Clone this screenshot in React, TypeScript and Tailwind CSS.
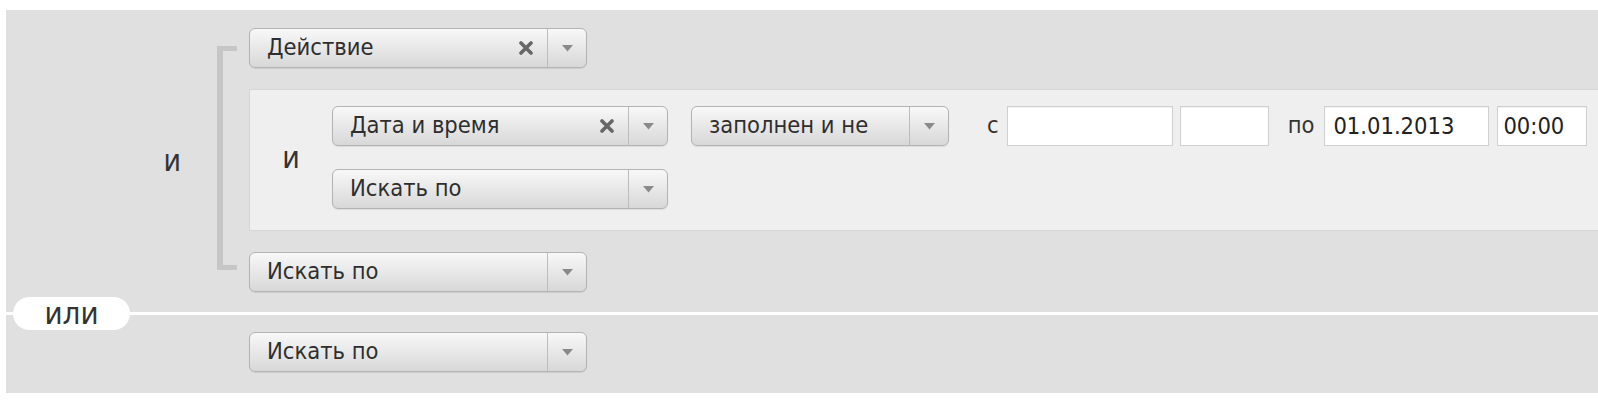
import React from "react";

const FONT = { fontFamily: '"DejaVu Sans Condensed", "Liberation Sans", Arial, sans-serif' };

function Arrow() {
  return (
    <svg width="11" height="7" viewBox="0 0 11 7">
      <path d="M0 0 L11 0 L5.5 6.5 Z" fill="#8a8a8a" />
    </svg>
  );
}

function Cross() {
  return (
    <svg width="14" height="14" viewBox="0 0 14 14">
      <path d="M2 2 L12 12 M12 2 L2 12" stroke="#676767" strokeWidth="3.6" strokeLinecap="round" />
    </svg>
  );
}

function Select({ label, width, clearable }: { label: string; width: string; clearable?: boolean }) {
  return (
    <div
      className={`${width} h-[40px] flex items-stretch shrink-0 rounded-[6px] border border-[#b3b3b3] bg-linear-to-b from-[#f8f8f8] to-[#d8d8d8] shadow-[0_1px_1px_rgba(0,0,0,0.08)]`}
    >
      <div className="flex-1 flex items-center pl-[17px] text-[23.5px] text-[#2e2e2e] leading-none">{label}</div>
      {clearable && (
        <div className="flex items-center pr-[14px]">
          <Cross />
        </div>
      )}
      <div className="w-[39px] border-l border-[#bcbcbc] flex items-center justify-center">
        <Arrow />
      </div>
    </div>
  );
}

function Field({ width, value, pad }: { width: string; value?: string; pad?: string }) {
  return (
    <input
      readOnly
      defaultValue={value || ""}
      className={`${width} ${pad || "px-[8px]"} h-[40px] shrink-0 bg-white border border-[#d0d0d0] shadow-[inset_0_1px_1px_rgba(0,0,0,0.06)] text-[23.5px] text-[#222] outline-none`}
      style={FONT}
    />
  );
}

export default function App() {
  return (
    <div className="relative w-[1598px] h-[406px] bg-white pt-[10px] pl-[6px] overflow-hidden" style={FONT}>
      {/* first group */}
      <div className="flex bg-[#e0e0e0] pt-[18px] pb-[20px]">
        <div className="w-[175px] shrink-0 flex items-center justify-end text-[30px] text-[#333]">и</div>
        <div className="ml-[36px] mt-[18px] mb-[22px] w-[20px] shrink-0 border-l-[6px] border-t-[5px] border-b-[5px] border-[#c6c6c6]" />
        <div className="ml-[12px] flex-1 flex flex-col gap-[21px]">
          <Select label="Действие" width="w-[338px]" clearable />

          <div className="flex items-center bg-[#efefef] border-y border-l border-[#d6d6d6] pt-[16px] pb-[21px]">
            <div className="w-[82px] shrink-0 text-center text-[30px] text-[#333]">и</div>
            <div className="flex flex-col gap-[23px]">
              <div className="flex items-center">
                <Select label="Дата и время" width="w-[336px]" clearable />
                <div className="ml-[23px]">
                  <Select label="заполнен и не" width="w-[258px]" />
                </div>
                <span className="ml-[38px] text-[23.5px] text-[#333]">с</span>
                <div className="ml-[8px] flex items-center gap-[7px]">
                  <Field width="w-[166px]" />
                  <Field width="w-[89px]" />
                </div>
                <span className="ml-[19px] text-[23.5px] text-[#333]">по</span>
                <div className="ml-[10px] flex items-center gap-[8px]">
                  <Field width="w-[165px]" value="01.01.2013" />
                  <Field width="w-[90px]" value="00:00" pad="px-[5px]" />
                </div>
              </div>
              <Select label="Искать по" width="w-[336px]" />
            </div>
          </div>

          <Select label="Искать по" width="w-[338px]" />
        </div>
      </div>

      {/* second group */}
      <div className="mt-[3px] bg-[#e0e0e0] h-[78px] pt-[17px] pl-[243px]">
        <Select label="Искать по" width="w-[338px]" />
      </div>

      <div className="absolute left-[13px] top-[297px] w-[117px] h-[33px] rounded-full bg-white flex items-center justify-center text-[31px] text-[#333] leading-none">
        или
      </div>
    </div>
  );
}
